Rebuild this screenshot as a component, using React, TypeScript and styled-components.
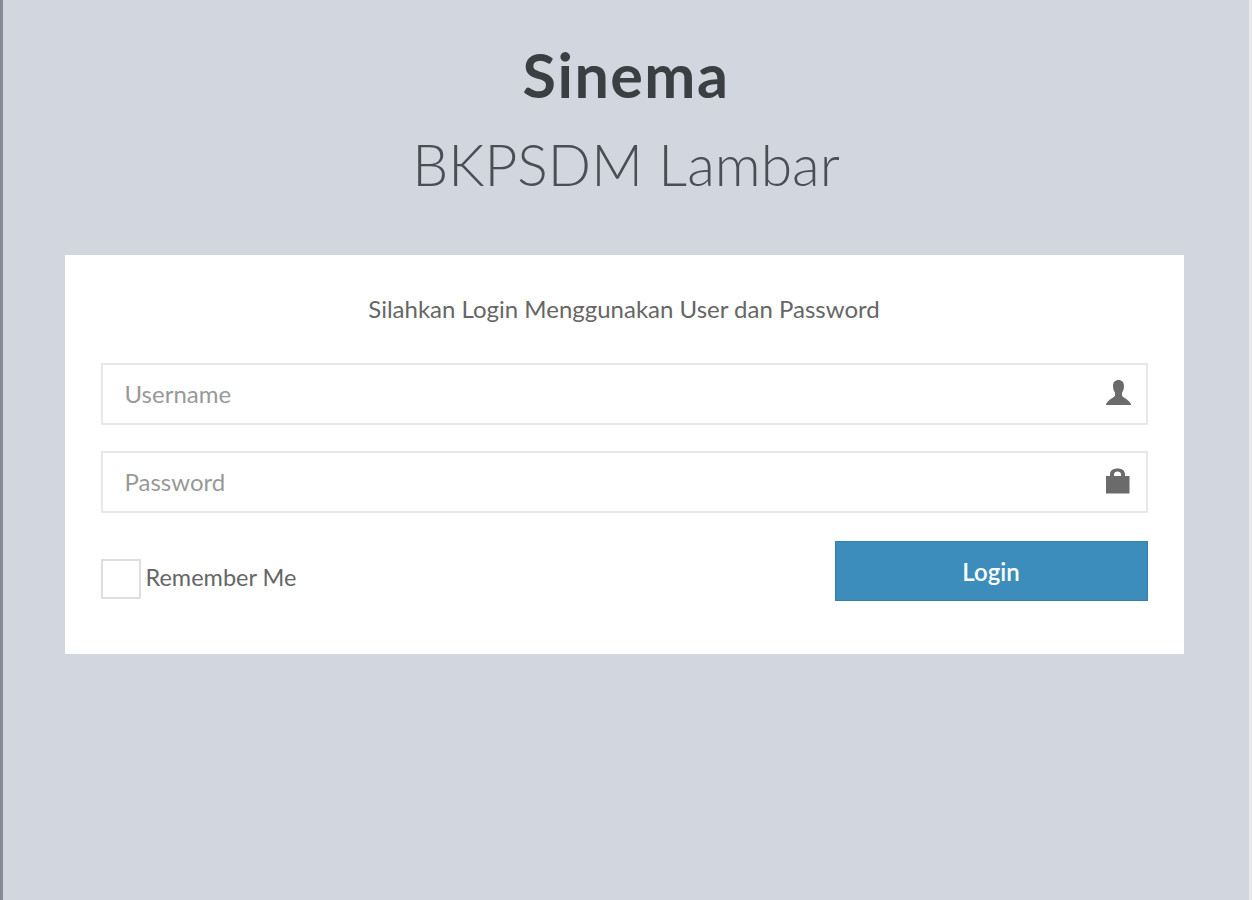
import styled, { createGlobalStyle } from "styled-components";
import { useState } from "react";

const GlobalStyle = createGlobalStyle`
  html, body {
    margin: 0;
    padding: 0;
    height: 100%;
    overflow: hidden;
  }
  body {
    font-family: "Lato", "Noto Sans", sans-serif;
    background-color: #d2d6de;
  }
  * {
    box-sizing: border-box;
  }
`;

const Page = styled.div`
  width: 1252px;
  height: 900px;
  background-color: #d2d6de;
  border-left: 3px solid #858a96;
  border-right: 3px solid #e6e8ec;
  display: flex;
  flex-direction: column;
  align-items: center;
`;

const Logo = styled.h1`
  margin: 0;
  padding-top: 42px;
  text-align: center;
  color: #3c3f42;
  font-size: 61px;
  font-weight: 700;
  letter-spacing: 1.5px;
  line-height: 66px;
`;

const SubLogo = styled.div`
  margin-top: 21px;
  text-align: center;
  color: #4a4e55;
  font-size: 57px;
  font-weight: 300;
  line-height: 70px;
`;

const Card = styled.form`
  margin-top: 56px;
  margin-left: -4px;
  width: 1119px;
  height: 399px;
  background-color: #fff;
  padding: 36px;
`;

const Message = styled.p`
  margin: 0 0 38px;
  padding-top: 2px;
  height: 34px;
  text-align: center;
  color: #666;
  font-size: 24px;
  line-height: 31px;
`;

const Field = styled.div`
  position: relative;
  height: 61.5px;
  margin-bottom: 26.5px;
`;

const Input = styled.input`
  display: block;
  width: 100%;
  height: 100%;
  border: 2px solid #e8e8e8;
  padding: 0 60px 0 22px;
  font-family: inherit;
  font-size: 24px;
  color: #555;
  outline: none;

  &::placeholder {
    color: #999;
    opacity: 1;
  }
`;

const FieldIcon = styled.svg`
  position: absolute;
  top: 17px;
  right: 16px;
  width: 26px;
  height: 26px;
  fill: #6b6b6b;
`;

const Actions = styled.div`
  display: flex;
  justify-content: space-between;
  align-items: flex-start;
  margin-top: 28.5px;
`;

const Remember = styled.label`
  display: flex;
  align-items: center;
  margin-top: 18px;
  color: #666;
  font-size: 23.5px;
`;

const RememberText = styled.span`
  padding-bottom: 5px;
`;

const Check = styled.input`
  appearance: none;
  width: 40px;
  height: 40px;
  margin: 0 5px 0 0;
  background-color: #fff;
  border: 2px solid #dedede;
`;

const LoginButton = styled.button`
  width: 313px;
  height: 60px;
  padding: 0;
  background-color: #3c8dbc;
  border: 1px solid #367fa9;
  color: #fff;
  font-family: inherit;
  font-size: 24px;
  font-weight: 600;
`;

export default function App() {
  const [remember, setRemember] = useState(false);

  return (
    <>
      <GlobalStyle />
      <Page>
        <Logo>Sinema</Logo>
        <SubLogo>BKPSDM Lambar</SubLogo>
        <Card onSubmit={(e) => e.preventDefault()}>
          <Message>Silahkan Login Menggunakan User dan Password</Message>
          <Field>
            <Input type="text" placeholder="Username" />
            <FieldIcon viewBox="0 0 26 26">
              <path d="M12.500 0c-3.400 0-5.500 2.200-5.500 6 0 2.500.7 5 2 6.800v3c-.5 1.500-6 3.200-9 8.200v1h25v-1c-3-5-8.500-6.700-9-8.200v-3c1.300-1.800 2-4.300 2-6.800C18 2.200 15.900 0 12.500 0z" />
            </FieldIcon>
          </Field>
          <Field>
            <Input type="password" placeholder="Password" />
            <FieldIcon viewBox="0 0 26 26">
              <path
                fillRule="evenodd"
                d="M4 8V6.500C4 2.500 7 .5 11.500.5S19 2.500 19 6.500V8h4.500v17.500H0V8h4zm4 0h7V6.500C15 4.500 13.500 3.500 11.500 3.500S8 4.500 8 6.500V8z"
              />
            </FieldIcon>
          </Field>
          <Actions>
            <Remember>
              <Check
                type="checkbox"
                checked={remember}
                onChange={(e) => setRemember(e.target.checked)}
              />
              <RememberText>Remember Me</RememberText>
            </Remember>
            <LoginButton type="submit">Login</LoginButton>
          </Actions>
        </Card>
      </Page>
    </>
  );
}
